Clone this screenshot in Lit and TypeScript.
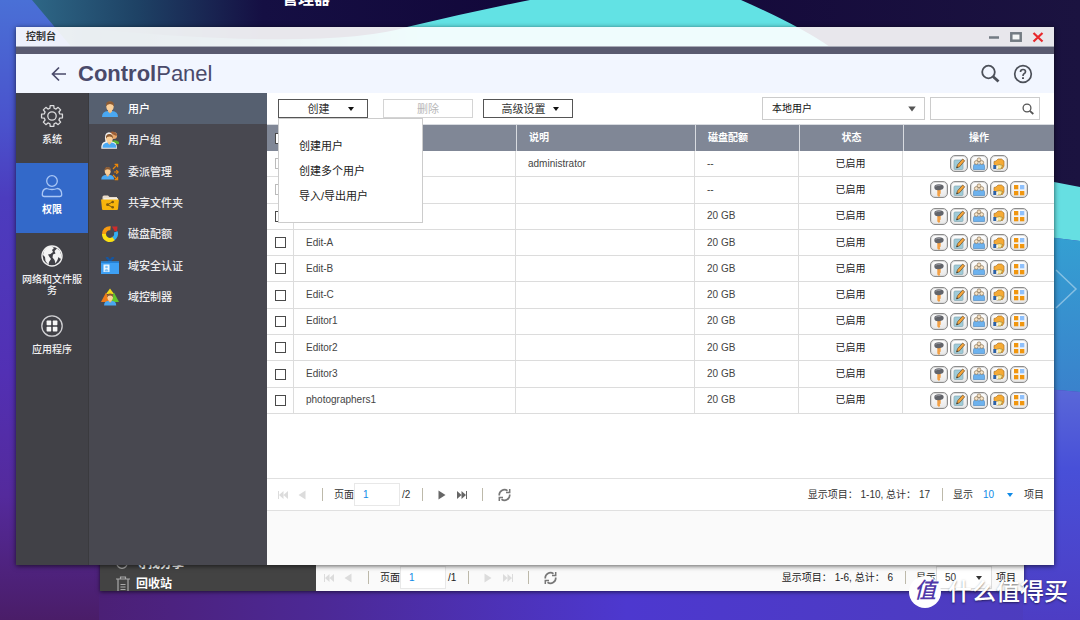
import { LitElement, html, svg, css, nothing } from "lit";
import { customElement, property } from "lit/decorators.js";
import { classMap } from "lit/directives/class-map.js";

const controls = css`
  *, *::before, *::after { box-sizing: border-box; }
  button, input, select { font: inherit; color: inherit; margin: 0; padding: 0; border: 0; background: none; border-radius: 0; outline: none; }
  button { display: inline-flex; align-items: center; justify-content: center; cursor: pointer; }
  select { appearance: none; cursor: pointer; }
  svg { display: block; flex: none; }
  a { color: inherit; text-decoration: none; }
`;

const caret = html`<svg width="8" height="6" viewBox="0 0 8 6"><path d="M1 1h6L4 5z" fill="currentColor"/></svg>`;

/* ---------- wallpaper ---------- */
const wallpaper = html`
  <svg class="wallpaper" viewBox="0 0 1080 620" preserveAspectRatio="none" aria-hidden="true">
    <defs>
      <linearGradient id="base"><stop offset="0" stop-color="#4a1d68"/><stop offset=".16" stop-color="#4c2280"/><stop offset=".3" stop-color="#4c2996"/><stop offset=".58" stop-color="#4d38cf"/><stop offset="1" stop-color="#4d3dbc"/></linearGradient>
      <linearGradient id="left" x2="0" y2="1"><stop offset="0" stop-color="#4a70d6"/><stop offset=".2" stop-color="#4a52cc"/><stop offset=".32" stop-color="#4c3cbe"/><stop offset=".6" stop-color="#5230b4"/><stop offset=".8" stop-color="#542a9c"/><stop offset="1" stop-color="#4a1d68"/></linearGradient>
      <linearGradient id="sky"><stop offset="0" stop-color="#2e6786"/><stop offset=".1" stop-color="#1e4265"/><stop offset=".22" stop-color="#150f43"/><stop offset=".5" stop-color="#120639"/><stop offset="1" stop-color="#1b1340"/></linearGradient>
      <linearGradient id="cyan" gradientUnits="userSpaceOnUse" x1="100" x2="420"><stop offset="0" stop-color="#5ee2e2" stop-opacity="0"/><stop offset="1" stop-color="#62e2e4"/></linearGradient>
      <linearGradient id="lower" x2="0" y2="1"><stop offset="0" stop-color="#5a68d8"/><stop offset=".35" stop-color="#4850d8"/><stop offset="1" stop-color="#4d3dc4"/></linearGradient>
      <linearGradient id="sea" x2="0" y2="1"><stop offset="0" stop-color="#34a0d2"/><stop offset="1" stop-color="#3a82cc"/></linearGradient>
    </defs>
    <rect width="1080" height="620" fill="url(#base)"/>
    <rect width="99" height="620" fill="url(#left)"/>
    <path d="M32 0H1080V190L900 140 200 200Z" fill="url(#sky)"/>
    <path d="M530 0H741Q800 26 830 47L860 80H100V30Q330 50 407 27Q470 12 530 0Z" fill="url(#cyan)"/>
    <path d="M1023 176L1080 187V241L1023 234Z" fill="#66dfe2"/>
    <path d="M1023 234L1080 241V392L1023 387Z" fill="url(#sea)"/>
    <path d="M1023 387L1080 392V620H1023Z" fill="url(#lower)"/>
    <path d="M1056 270L1076 289 1056 308" fill="none" stroke="#fff" stroke-opacity=".4" stroke-width="1.5"/>
  </svg>`;

/* ---------- category icons (first rail) ---------- */
const gearPath = (() => {
  const pts: string[] = [];
  for (let i = 0; i < 8; i++) {
    const a = (i * Math.PI) / 4;
    for (const [d, r] of [[-0.26, 8], [-0.17, 10.6], [0.17, 10.6], [0.26, 8]]) {
      pts.push(`${(12 + r * Math.cos(a + d)).toFixed(2)} ${(12 + r * Math.sin(a + d)).toFixed(2)}`);
    }
  }
  return `M${pts.join("L")}Z`;
})();

const railIcons: Record<string, unknown> = {
  gear: svg`<path d=${gearPath} fill="none" stroke="#dcdcde" stroke-width="1.3" stroke-linejoin="round"/><circle cx="12" cy="12" r="4.2" fill="none" stroke="#dcdcde" stroke-width="1.3"/>`,
  person: svg`<g fill="none" stroke="#a9c6f5" stroke-width="1.3"><circle cx="12" cy="7" r="5.3"/><path d="M6.5 14.5C3.5 15 2.3 17 2.3 20.500Q2.300 22.500 4.300 22.500H19.700Q21.700 22.500 21.700 20.500C21.700 17 20.500 15 17.500 14.500Q12 16.500 6.500 14.500Z"/></g>`,
  globe: svg`<circle cx="12" cy="12" r="10" fill="none" stroke="#eee" stroke-width="1.4"/><path d="M3.500 8C5 4.500 8 2.500 11.500 2.300L14 4 12 6 13 8 10.500 10 8 10.500 9.500 13 11 15 9 18 8.500 21 5.500 17 5 13 3 11Z" fill="#f4f4f4"/><path d="M14.500 7L17 4.500 20 7 21.500 12 20.500 15 18.500 13 17.500 16 15.500 19.500 14.500 16 12.500 13.500 13 10.500 15.500 9.500Z" fill="#f4f4f4"/>`,
  apps: svg`<circle cx="12" cy="12" r="10.200" fill="none" stroke="#d0d0d3" stroke-width="1.300"/><g fill="#f6f6f6"><rect x="6.600" y="6.600" width="4.600" height="4.600" rx=".6"/><rect x="12.800" y="6.600" width="4.600" height="4.600" rx=".6"/><rect x="6.600" y="12.800" width="4.600" height="4.600" rx=".6"/><rect x="12.800" y="12.800" width="4.600" height="4.600" rx=".6"/></g>`,
};

/* ---------- section icons (second rail) ---------- */
const bust = (x: number, y: number, s: number) => svg`<g transform="translate(${x} ${y}) scale(${s})">
  <path d="M1 17Q1 11.500 7 11L9 13 11 11Q17 11.500 17 17Z" fill="#4aa8f2"/><path d="M7 9h4v2.500L9 13.500 7 11.500Z" fill="#f0bd84"/>
  <ellipse cx="9" cy="6.200" rx="3.700" ry="4.500" fill="#fbd09a"/><path d="M5 6.500Q4.500 1.200 9 1.200T13 6.500Q12 4 9 4T5 6.500Z" fill="#8a5a33"/></g>`;

const sectionIcons: Record<string, unknown> = {
  user: svg`${bust(0, 0, 1)}`,
  group: svg`<circle cx="12.500" cy="4.500" r="3.600" fill="#e8a86c"/><path d="M9 1.500Q13 -1 16 3.500L15.500 5 11 3Z" fill="#9b5f38"/><path d="M9 12Q13 7 18 11V13H12Z" fill="#5bb030"/><path d="M.3 17.800Q0 11 4.500 10.500Q2.500 1.500 8 1.300Q13 1.500 11 10.500Q16.300 11 16 17.800Z" fill="#f4f1ee"/>${bust(0.6, 2, 0.87)}`,
  delegate: svg`${bust(-0.5, 3, 0.8)}<g stroke="#ea8608" stroke-width="1.200" fill="none"><path d="M12 6L16 1.800M13 9H17M12 12L16 16.200"/><path d="M13.600 1.300H16.600V4.300M15.300 7.200L17.200 9 15.300 10.800M13.600 16.700H16.600V13.700"/></g>`,
  folder: svg`<path d="M1.500 3Q1.500 1.500 3 1.500H7L8.500 3H16V8H1.500Z" fill="#e9dccb"/><path d="M3 4.200H17V8H3Z" fill="#f7f2e8"/><path d="M0 5.500H18L17 15Q16.900 16 16 16H2Q1.100 16 1 15Z" fill="#f8b50c"/><path d="M11.500 8L6.500 10.700 11.500 13.300" fill="none" stroke="#7c5a10" stroke-width="1"/><g fill="#7c5a10"><circle cx="11.700" cy="8" r="1.300"/><circle cx="6.500" cy="10.700" r="1.400"/><circle cx="11.700" cy="13.300" r="1.300"/></g>`,
  quota: svg`<g fill="none" stroke-width="4"><path d="M3 9.500A5.800 5.800 0 0 1 9.500 3.200" stroke="#f79b12"/><path d="M11 1.500L16.500 1.500 16 6.500 13.500 6Z" fill="#cf2b2b" stroke="none"/><path d="M14.800 6.800A5.800 5.800 0 0 1 12 13.800" stroke="#33aef2"/><path d="M12.500 13.600A5.800 5.800 0 0 1 3 9" stroke="#fbe012"/></g>`,
  badge: svg`<path d="M5.500 0L9 4 12.500 0" fill="none" stroke="#1656a0" stroke-width="2.400"/><rect y="4.500" width="18" height="12.500" fill="#3ea0f4"/><rect y="4.500" width="18" height="1.500" fill="#2482d8"/><rect x="2.500" y="7.500" width="6" height="7.500" fill="#eaf5ff"/><circle cx="5.500" cy="10" r="1.300" fill="#7cc0f6"/><path d="M3.500 14.500Q3.500 12 5.500 12T7.500 14.500Z" fill="#7cc0f6"/>`,
  domain: svg`<path d="M9 .5L13 6H5Z" fill="#f3dc17"/><path d="M5 4.500L9.500 14H0Z" fill="#ef7a18"/><path d="M13 4.500L18 14H8.500Z" fill="#62c62a"/>${bust(2.300, 4.500, 0.76)}`,
};

/* ---------- row action icons ---------- */
const actionIcons: Record<string, unknown> = {
  password: svg`<path d="M6.300 7H9.700V11.500L8.700 12.500 9.300 13.500 8 15 6.300 13.500Z" fill="#f2a046"/><path d="M3.300 5Q3.300 2.300 8 2.300T12.700 5 8 8.200 3.300 5Z" fill="#62646a"/><path d="M4.500 4.300Q6 3 9.500 3.300" stroke="#a3a6ad" stroke-width=".8" fill="none"/>`,
  edit: svg`<rect x="3" y="4" width="9" height="9.500" rx="1" fill="#9fcbd8" stroke="#86a9b4" stroke-width=".7"/><path d="M5.500 12L6.500 8.800 11.700 3 13.700 4.800 8.500 10.800Z" fill="#f6a63c" stroke="#6b4a26" stroke-width=".7"/><path d="M5.500 12L6 10.300 7.200 11.400Z" fill="#333"/>`,
  groups: svg`<path d="M2.500 13.500V10Q2.500 7.800 5.200 7.800T8 9.500Q8 7.800 10.800 7.800T13.500 10V13.500Z" fill="#6db2ee" stroke="#4685c0" stroke-width=".6"/><circle cx="8" cy="3.800" r="1.900" fill="#f4dfc0" stroke="#8a7458" stroke-width=".7"/><circle cx="5.300" cy="6.500" r="1.900" fill="#f8e6ca" stroke="#8a7458" stroke-width=".7"/><circle cx="10.700" cy="6.500" r="1.900" fill="#f8e6ca" stroke="#8a7458" stroke-width=".7"/>`,
  share: svg`<path d="M3 7.500V5.500L5 5 7 3H10.500L13 5V10L11.500 12.500H4Z" fill="#f5ab36" stroke="#a46a1c" stroke-width=".6"/><path d="M5.500 9.500Q8 7.500 11.500 9.500L10 13H5.500Z" fill="#fbe89a" stroke="#8c7430" stroke-width=".6"/><rect x="2.300" y="9" width="3" height="4" fill="#2c62a8"/><rect x="5.300" y="9.700" width="1.500" height="3.300" fill="#f4f7fb"/>`,
  apps: svg`<rect x="3" y="3" width="4.300" height="4.300" fill="#f0960f"/><rect x="9" y="3" width="4.300" height="4.300" fill="#8fc0fb"/><rect x="3" y="9" width="4.300" height="4.300" fill="#f0960f"/><rect x="9" y="9" width="4.300" height="4.300" fill="#f0960f"/>`,
};
const actionNames: Record<string, string> = { password: "更改密码", edit: "编辑账户信息", groups: "编辑用户组", share: "编辑共享文件夹权限", apps: "编辑应用程序权限" };

/* ---------- pager ---------- */
@customElement("list-pager")
class ListPager extends LitElement {
  @property({ type: Number }) pages = 1;
  @property() range = "";
  @property({ type: Number }) total = 0;
  @property() size = "10";
  @property({ type: Boolean, reflect: true }) boxed = false;

  static styles = [controls, css`
    :host { display: flex; align-items: center; justify-content: space-between; font-size: 10px; line-height: 16px; color: #333; padding: 0 10px 0 11px; white-space: nowrap; }
    :host([boxed]) { padding: 0 8px; color: #222; }
    .part { display: flex; align-items: center; }
    .nav { color: #666; width: 10px; height: 14px; }
    .nav:disabled { color: #dcdcdc; cursor: default; }
    .near { margin: 0 15px 0 9px; }
    .next { margin: 0 10px 0 14px; }
    .last { margin-right: 15px; }
    .bar { width: 1px; height: 13px; background: #bdb9aa; flex: none; }
    .page { display: flex; align-items: center; margin-left: 11px; }
    .page input { width: 46px; height: 23px; margin-right: 2px; padding-left: 8px; border: 1px solid #e8e8e8; background: #fff; color: #0f8ae6; }
    .count { margin-right: 12px; }
    .refresh { margin-left: 15px; color: #777; }
    .size { display: flex; align-items: center; gap: 10px; margin-left: 10px; }
    .pick { position: relative; display: flex; align-items: center; width: 31px; color: #0f8ae6; }
    .pick select { width: 100%; height: 23px; }
    .pick svg { position: absolute; right: 0; pointer-events: none; }
    :host([boxed]) .size { gap: 0; }
    :host([boxed]) .pick { width: 56px; margin-right: 4px; color: #333; }
    :host([boxed]) .pick svg { right: 9px; }
    :host([boxed]) select { padding-left: 8px; border: 1px solid #ddd; background: #fff; }
    .ends { margin-left: 12px; }
  `];

  render() {
    const more = this.pages > 1;
    return html`
      <div class="part">
        <button class="nav" disabled aria-label="首页"><svg width="10" height="10" viewBox="0 0 10 10" fill="currentColor"><path d="M0 1h1v8H0zM5.500 1v8L1 5zM10 1v8L5.500 5z"/></svg></button>
        <button class="nav near" disabled aria-label="上一页"><svg width="8" height="10" viewBox="0 0 8 10"><path d="M7.500.5v9L.5 5z" fill="currentColor"/></svg></button>
        <span class="bar"></span>
        <label class="page">页面<input type="text" .value=${"1"}>/${this.pages}</label>
        <span class="bar ends"></span>
        <button class="nav next" ?disabled=${!more} aria-label="下一页"><svg width="8" height="10" viewBox="0 0 8 10"><path d="M.5.5v9L7.500 5z" fill="currentColor"/></svg></button>
        <button class="nav last" ?disabled=${!more} aria-label="末页"><svg width="10" height="10" viewBox="0 0 10 10" fill="currentColor"><path d="M9 1h1.200v8H9zM0 1v8l4.500-4zM4.500 1v8L9 5z"/></svg></button>
        <span class="bar"></span>
        <button class="refresh" aria-label="刷新"><svg width="13" height="14" viewBox="0 0 13 14" fill="none" stroke="currentColor" stroke-width="1.700"><path d="M1.300 7.500A5.200 5.200 0 0 1 9.500 2.700M11.700 6.500A5.200 5.200 0 0 1 3.500 11.300"/><path d="M8 4.600H11.700V1M5 9.400H1.300V13" stroke-width="1.500"/></svg></button>
      </div>
      <div class="part">
        <span class="count">显示项目： ${this.range}, 总计： ${this.total}</span>
        <span class="bar"></span>
        <label class="size">显示<span class="pick"><select><option>${this.size}</option></select>${caret}</span>项目</label>
      </div>`;
  }
}

/* ---------- user table ---------- */
type User = { name?: string; note?: string; quota: string; locked?: boolean; acts: string[] };
const all = ["password", "edit", "groups", "share", "apps"];
const users: User[] = [
  { note: "administrator", quota: "--", locked: true, acts: ["edit", "groups", "share"] },
  { quota: "--", locked: true, acts: all },
  { quota: "20 GB", acts: all },
  ...["Edit-A", "Edit-B", "Edit-C", "Editor1", "Editor2", "Editor3", "photographers1"].map((name) => ({ name, quota: "20 GB", acts: all })),
];

@customElement("user-table")
class UserTable extends LitElement {
  static styles = [controls, css`
    :host { display: block; font-size: 10px; color: #444; }
    table { width: 100%; height: 289px; table-layout: fixed; border-collapse: separate; border-spacing: 0; }
    th { height: 26px; padding: 0; background: #808796; color: #fff; font-weight: 700; text-align: left; border-left: 1px solid #d8dbe0; }
    th:first-child, .plain { border-left: 0; }
    td { padding: 0; border-right: 1px solid #dcdcdc; border-bottom: 1px solid #dcdcdc; line-height: 16px; }
    td:last-child { border-right: 0; }
    .tick { width: 27px; text-align: center; }
    .note { width: 179px; }
    .quota, .state { width: 104px; }
    .ops { width: 151px; }
    .pad { padding-left: 12px; }
    .mid { text-align: center; color: #222; }
    th.mid { color: #fff; }
    input { display: block; appearance: none; width: 11px; height: 11px; margin: 0 auto; border: 1px solid #4a4a4a; background: #fff; }
    input:disabled { border-color: #bbb; }
    .acts { display: flex; justify-content: center; gap: 2px; }
    .acts button { width: 18px; height: 17px; border: 1px solid #8c8c8c; border-radius: 5px; background: linear-gradient(#fff, #e8e8e8); box-shadow: inset 0 0 0 1px #dcdcdc; }
  `];

  render() {
    return html`<table>
      <thead><tr>
        <th class="tick"><input type="checkbox" aria-label="全选"></th>
        <th class="plain"></th><th class="note pad">说明</th><th class="quota pad">磁盘配额</th>
        <th class="state mid">状态</th><th class="ops mid">操作</th>
      </tr></thead>
      <tbody>${users.map((u) => html`<tr>
        <td class="tick"><input type="checkbox" ?disabled=${u.locked} aria-label=${u.name ?? "选择"}></td>
        <td class="pad">${u.name ?? nothing}</td><td class="pad">${u.note ?? nothing}</td><td class="pad">${u.quota}</td>
        <td class="mid">已启用</td>
        <td><div class="acts">${u.acts.map((k) => html`<button aria-label=${actionNames[k]}><svg width="16" height="16" viewBox="0 0 16 16">${actionIcons[k]}</svg></button>`)}</div></td>
      </tr>`)}</tbody>
    </table>`;
  }
}

/* ---------- desktop ---------- */
const rail = [
  { icon: "gear", label: "系统" },
  { icon: "person", label: "权限", on: true },
  { icon: "globe", label: "网络和文件服务" },
  { icon: "apps", label: "应用程序" },
];
const sections = [
  { icon: "user", label: "用户", on: true },
  { icon: "group", label: "用户组" },
  { icon: "delegate", label: "委派管理" },
  { icon: "folder", label: "共享文件夹" },
  { icon: "quota", label: "磁盘配额" },
  { icon: "badge", label: "域安全认证" },
  { icon: "domain", label: "域控制器" },
];

@customElement("app-root")
class AppRoot extends LitElement {
  static styles = [controls, css`
    :host { display: block; position: relative; height: 100vh; overflow: hidden; font-family: "Liberation Sans", "Noto Sans CJK SC", sans-serif; font-size: 10px; line-height: 16px; color: #333; }
    .wallpaper { position: absolute; inset: 0; width: 100%; height: 100%; }
    .shortcut { position: absolute; left: 282px; top: -13px; font-size: 16px; line-height: 24px; font-weight: 700; color: #fff; }

    .behind { position: absolute; left: 100px; right: 56px; bottom: 29px; height: 200px; display: flex; overflow: hidden; box-shadow: 0 1px 4px rgba(0, 0, 0, .6); }
    .places { width: 216px; background: #434343; display: flex; flex-direction: column; justify-content: flex-end; padding-left: 16px; color: #fff; font-size: 12px; font-weight: 700; }
    .places a { display: flex; align-items: center; gap: 6px; height: 25px; }
    .places a:last-child { height: 15px; }
    .listing { flex: 1; background: #fafafa; display: flex; flex-direction: column; justify-content: flex-end; }
    .listing list-pager { height: 27px; }

    .window { position: absolute; inset: 27px 26px 55px 16px; display: flex; flex-direction: column; box-shadow: 0 1px 5px rgba(0, 0, 0, .65); }
    .title { height: 20px; flex: none; display: flex; align-items: center; justify-content: space-between; padding: 0 10px; background: rgba(255, 255, 255, .9); border-bottom: 1px solid #a9acb8; font-weight: 700; color: #333; }
    .title div { display: flex; gap: 10px; }
    .strip { height: 7px; flex: none; background: #5a5b70; }
    .brand { height: 39px; flex: none; display: flex; align-items: center; background: #f2f6ff; padding: 0 21px 0 35px; color: #4a4a6a; }
    .brand h1 { flex: 1; margin: 0 0 0 11px; font-size: 22px; line-height: 28px; font-weight: 400; }
    .brand div { display: flex; gap: 13px; }
    .body { flex: 1; min-height: 0; display: flex; }

    .rail { width: 72px; background: #414147; color: #f2f2f3; font-weight: 500; }
    .rail a { display: flex; flex-direction: column; align-items: center; height: 70px; padding: 11px 4px 0; gap: 6px; line-height: 11px; text-align: center; }
    .rail .on { background: #3369c9; color: #fff; font-weight: 700; }
    .sections { width: 179px; background: #484850; border-left: 1px solid #3a3a3e; color: #ececee; font-size: 11px; font-weight: 500; }
    .sections nav { display: flex; flex-direction: column; height: 220px; }
    .sections a { flex: 1; display: flex; align-items: center; gap: 9px; padding-left: 12px; }
    .sections .on { background: #566070; color: #fff; }

    .content { flex: 1; min-width: 0; display: flex; flex-direction: column; background: #fff; }
    .tools { height: 32px; flex: none; display: flex; align-items: center; padding: 0 14px 0 11px; border-bottom: 1px solid #d8dbe0; }
    .tool { width: 90px; height: 19px; border: 1px solid #555; background: #fff; color: #333; font-size: 11px; }
    .tool span { flex: 1; padding-left: 11px; text-align: center; }
    .tool svg { margin-right: 12px; color: #111; }
    .tool:disabled { border-color: #d4d4d4; color: #b8b8b8; }
    .remove { margin: 0 10px 0 15px; }
    .anchor { position: relative; display: flex; }
    .menu { position: absolute; z-index: 1; left: 0; top: 19px; width: 145px; height: 105px; background: #fff; border: 1px solid #ccc; padding: 14px 20px; display: flex; flex-direction: column; align-items: flex-start; font-size: 11px; }
    .menu button { height: 25px; color: #222; }
    .filters { flex: 1; display: flex; justify-content: flex-end; gap: 5px; }
    .field { position: relative; display: flex; align-items: center; height: 23px; }
    .kind { width: 163px; color: #111; }
    .find { width: 110px; }
    .field select, .field input { width: 100%; height: 100%; border: 1px solid #ccc; background: #fff; padding-left: 9px; }
    .field svg { position: absolute; right: 8px; pointer-events: none; color: #555; }
    .kind svg { width: 10px; height: 8px; }
    .find svg { right: 6px; }
    user-table { flex: 1; }
    .content list-pager { height: 33px; flex: none; border-top: 1px solid #e0e0e0; border-bottom: 1px solid #e0e0e0; }
    .foot { height: 54px; flex: none; background: #fafafa; }

    .mark { position: absolute; right: 12px; bottom: 11px; display: flex; align-items: center; gap: 7px; font-size: 24px; line-height: 34px; font-weight: 500; color: #fff; text-shadow: 0 1px 2px rgba(0, 0, 0, .5); }
    .mark b { width: 32px; height: 32px; border-radius: 16px; background: #fff; color: #5038a8; font-size: 22px; line-height: 30px; font-weight: 500; font-style: italic; text-align: center; text-shadow: none; }
  `];

  private link(item: { icon: string; label: string; on?: boolean }, set: Record<string, unknown>, px: number, box: number) {
    return html`<a href="#" class=${classMap({ on: !!item.on })}><svg width=${px} height=${px} viewBox="0 0 ${box} ${box}">${set[item.icon]}</svg><span>${item.label}</span></a>`;
  }

  render() {
    return html`
      ${wallpaper}
      <div class="shortcut">管理器</div>

      <section class="behind">
        <nav class="places">
          <a href="#"><svg width="14" height="14" viewBox="0 0 14 14" fill="none" stroke="#aaa" stroke-width="1.300"><circle cx="6" cy="6" r="5.300"/></svg>寻找分享</a>
          <a href="#"><svg width="14" height="16" viewBox="0 0 14 16" fill="none" stroke="#aaa" stroke-width="1.200"><path d="M0 3H14M4.500 3V1H9.500V3M2 3V16M12 3V16M4.500 8.500H9.500M4.500 11H9.500M4.500 13.500H9.500"/></svg>回收站</a>
        </nav>
        <div class="listing"><list-pager boxed .pages=${1} range="1-6" .total=${6} size="50"></list-pager></div>
      </section>

      <main class="window">
        <header class="title">控制台
          <div>
            <button aria-label="最小化"><svg width="12" height="12" viewBox="0 0 12 12"><path d="M1 6.500H11" stroke="#737b83" stroke-width="2.500"/></svg></button>
            <button aria-label="最大化"><svg width="12" height="12" viewBox="0 0 12 12"><rect x="1.300" y="2.300" width="9.400" height="7.400" fill="#f4f6f7" stroke="#737b83" stroke-width="2.500"/></svg></button>
            <button aria-label="关闭"><svg width="12" height="12" viewBox="0 0 12 12"><path d="M1.500 2L10.500 10.500M10.500 2L1.500 10.500" stroke="#e8282c" stroke-width="2.200"/></svg></button>
          </div>
        </header>
        <div class="strip"></div>
        <div class="brand">
          <button aria-label="返回"><svg width="16" height="16" viewBox="0 0 16 16" fill="none" stroke="#4a4a6a" stroke-width="1.700"><path d="M15 8H1.500M8 1.500L1.500 8 8 14.500"/></svg></button>
          <h1><b>Control</b>Panel</h1>
          <div>
            <button aria-label="搜索"><svg width="20" height="20" viewBox="0 0 20 20" fill="none" stroke="#4c5059"><circle cx="8.500" cy="8" r="6.300" stroke-width="1.800"/><path d="M13 12.500L18.500 17.500" stroke-width="2.800"/></svg></button>
            <button aria-label="帮助"><svg width="20" height="20" viewBox="0 0 20 20" fill="none" stroke="#4c5059"><circle cx="10" cy="10" r="8.300" stroke-width="1.700"/><path d="M7.500 8Q7.500 5.500 10 5.500T12.500 7.700Q12.500 9 11 9.800 10 10.400 10 12" stroke-width="1.700"/><path d="M10 13.200V15" stroke-width="2"/></svg></button>
          </div>
        </div>
        <div class="body">
          <nav class="rail">${rail.map((i) => this.link(i, railIcons, 24, 24))}</nav>
          <div class="sections"><nav>${sections.map((i) => this.link(i, sectionIcons, 18, 18))}</nav></div>
          <div class="content">
            <div class="tools">
              <div class="anchor">
                <button class="tool" aria-expanded="true"><span>创建</span>${caret}</button>
                <div class="menu">
                  <button>创建用户</button><button>创建多个用户</button><button>导入/导出用户</button>
                </div>
              </div>
              <button class="tool remove" disabled>删除</button>
              <button class="tool"><span>高级设置</span>${caret}</button>
              <div class="filters">
                <label class="field kind"><select aria-label="用户类型"><option>本地用户</option></select>${caret}</label>
                <label class="field find"><input type="text" aria-label="搜索用户"><svg width="12" height="12" viewBox="0 0 12 12" fill="none" stroke="currentColor"><circle cx="5" cy="5" r="3.900" stroke-width="1.300"/><path d="M7.800 7.800L11.300 11" stroke-width="1.800"/></svg></label>
              </div>
            </div>
            <user-table></user-table>
            <list-pager .pages=${2} range="1-10" .total=${17} size="10"></list-pager>
            <div class="foot"></div>
          </div>
        </div>
      </main>

      <div class="mark"><b>值</b>什么值得买</div>`;
  }
}
